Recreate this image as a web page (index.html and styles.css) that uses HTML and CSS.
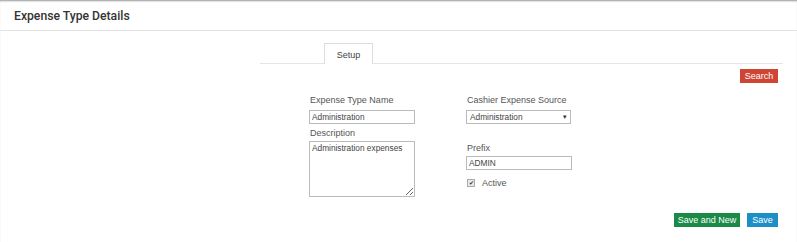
FILE: index.html
```html
<!DOCTYPE html>
<html lang="en">
<head>
  <meta charset="UTF-8">
  <title>Expense Type Details</title>
  <link rel="stylesheet" href="styles.css">
</head>
<body>

  <div class="page-head">
    <h2>Expense Type Details</h2>
  </div>

  <div class="content">
    <div class="tabs">
      <div class="tab active">Setup</div>
    </div>

    <div class="toolbar">
      <button class="btn btn-search">Search</button>
    </div>

    <div class="form-area">
      <div class="col">
        <label>Expense Type Name</label>
        <input type="text" class="field" value="Administration">
        <label class="lbl-desc">Description</label>
        <textarea class="field area">Administration expenses</textarea>
      </div>
      <div class="col">
        <label>Cashier Expense Source</label>
        <div class="field select">Administration <span class="caret">&#9662;</span></div>
        <label class="lbl-prefix">Prefix</label>
        <input type="text" class="field" value="ADMIN">
        <div class="check-row">
          <span class="check">&#10004;</span>
          <span>Active</span>
        </div>
      </div>
    </div>

    <div class="actions">
      <button class="btn btn-new">Save and New</button>
      <button class="btn btn-save">Save</button>
    </div>
  </div>

</body>
</html>
```
FILE: styles.css
```css
body { margin: 0; font-family: "Liberation Sans", Arial, sans-serif; font-size: 9px; color: #555; background: #fff; box-shadow: inset 0 2px 2px -1px #999; min-height: 242px; }
.page-head { height: 31px; border-bottom: 1px solid #e3e3e3; box-sizing: border-box; padding: 9px 0 0 14px; }
.page-head h2 { margin: 0; font-family: Roboto, sans-serif; font-size: 12.2px; font-weight: 500; color: #333; }
.content { margin-left: 260px; width: 523px; }
.tabs { margin-top: 11px; padding-left: 64px; border-bottom: 1px solid #e5e5e5; height: 21px; }
.tab { width: 49px; height: 21px; box-sizing: border-box; border: 1px solid #ddd; border-bottom: none; background: #fff; text-align: center; line-height: 22px; color: #444; position: relative; top: 1px; }
.toolbar { display: flex; justify-content: flex-end; padding-right: 5px; margin-top: 5px; }
.btn { border: none; color: #fff; font-family: "Liberation Sans", Arial, sans-serif; font-size: 9px; height: 14px; padding: 0 6px; cursor: pointer; }
.btn-search { background: #d04433; width: 38px; padding: 0; }
.form-area { display: flex; margin-left: 49px; margin-top: 12px; }
.col { width: 157px; display: flex; flex-direction: column; align-items: flex-start; }
label { margin-left: 1px; margin-bottom: 5px; color: #555; }
.field { width: 106px; height: 14px; box-sizing: border-box; border: 1px solid #bbb; font-family: "Liberation Sans", Arial, sans-serif; font-size: 8.3px; color: #444; padding: 0 2px; margin: 0; }
.lbl-desc { margin-top: 4px; margin-bottom: 3px; }
.area { height: 56px; padding: 1px 2px; resize: vertical; }
.select { width: 105px; display: flex; justify-content: space-between; align-items: center; padding: 0 3px; }
.caret { font-size: 7px; color: #333; }
.lbl-prefix { margin-top: 19px; margin-bottom: 3px; }
.check-row { display: flex; align-items: center; margin-top: 8px; margin-left: 1px; gap: 7px; }
.check { width: 6px; height: 6px; border: 1px solid #aaa; background: #e8e8e8; font-size: 6px; line-height: 6px; text-align: center; color: #333; }
.actions { display: flex; justify-content: flex-end; gap: 7px; padding-right: 5px; margin-top: 16px; }
.btn-new { background: #1b8a47; width: 66px; padding: 0; }
.btn-save { background: #1d8fc7; width: 31px; padding: 0; }
```
